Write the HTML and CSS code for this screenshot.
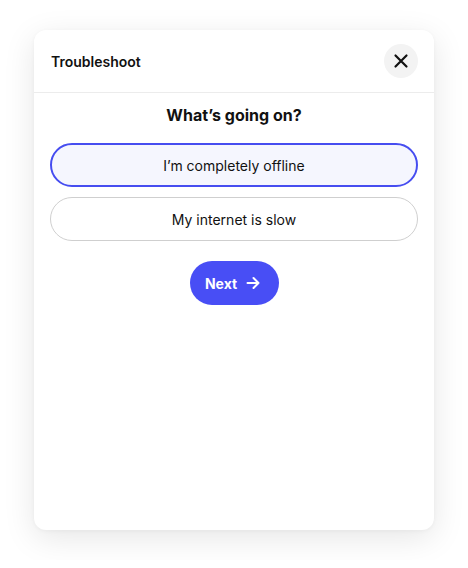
FILE: index.html
```html
<!DOCTYPE html>
<html lang="en">
<head>
<meta charset="utf-8">
<title>Troubleshoot</title>
<link rel="stylesheet" href="styles.css">
</head>
<body>
<div class="card">
  <div class="header">
    <span class="header-title">Troubleshoot</span>
    <button class="close" aria-label="Close">
      <svg width="16" height="16" viewBox="0 0 16 16" fill="none" stroke="#111" stroke-width="2.2" stroke-linecap="round"><path d="M2.5 2.5l11 11M13.5 2.5l-11 11"/></svg>
    </button>
  </div>
  <div class="body">
    <h2 class="question">What’s going on?</h2>
    <div class="options">
      <button class="option selected">I’m completely offline</button>
      <button class="option">My internet is slow</button>
    </div>
    <div class="actions">
      <button class="next">Next
        <svg width="16" height="16" viewBox="0 0 16 16" fill="none" stroke="#fff" stroke-width="2" stroke-linecap="round" stroke-linejoin="round"><path d="M2.5 8h11M8.5 3l5 5-5 5"/></svg>
      </button>
    </div>
  </div>
</div>
</body>
</html>
```
FILE: styles.css
```css
* { box-sizing: border-box; }
html, body { margin: 0; background: #fff; }
body {
  padding: 30px 34px;
  font-family: Inter, "Noto Sans", sans-serif;
  color: #111;
}
.card {
  width: 400px;
  height: 500px;
  background: #fff;
  border-radius: 12px;
  box-shadow: 0 8px 32px rgba(0,0,0,0.10), 0 1px 4px rgba(0,0,0,0.04);
  overflow: hidden;
}
.header {
  display: flex;
  align-items: center;
  justify-content: space-between;
  padding: 14px 16px 14px 17px;
  border-bottom: 1px solid #ececec;
}
.header-title {
  font-size: 14px;
  font-weight: 600;
}
.close {
  width: 34px;
  height: 34px;
  border-radius: 50%;
  border: none;
  background: #f3f3f3;
  display: flex;
  align-items: center;
  justify-content: center;
  padding: 0;
}
.body {
  padding: 12px 16px 16px;
}
.question {
  margin: 0 0 18px;
  text-align: center;
  font-size: 16px;
  line-height: 20px;
  font-weight: 700;
}
.options {
  display: flex;
  flex-direction: column;
  gap: 10px;
}
.option {
  height: 44px;
  border-radius: 22px;
  border: 1px solid #cfcfcf;
  background: #fff;
  font-family: inherit;
  font-size: 14px;
  color: #111;
}
.option.selected {
  border: 2px solid #464df0;
  background: #f5f6fe;
}
.actions {
  display: flex;
  justify-content: center;
  margin-top: 20px;
}
.next {
  height: 44px;
  width: 89px;
  border: none;
  border-radius: 22px;
  background: #484ef5;
  color: #fff;
  font-family: inherit;
  font-size: 14px;
  font-weight: 700;
  display: flex;
  align-items: center;
  justify-content: center;
  gap: 8px;
  padding: 0 2px 0 0;
}
```
